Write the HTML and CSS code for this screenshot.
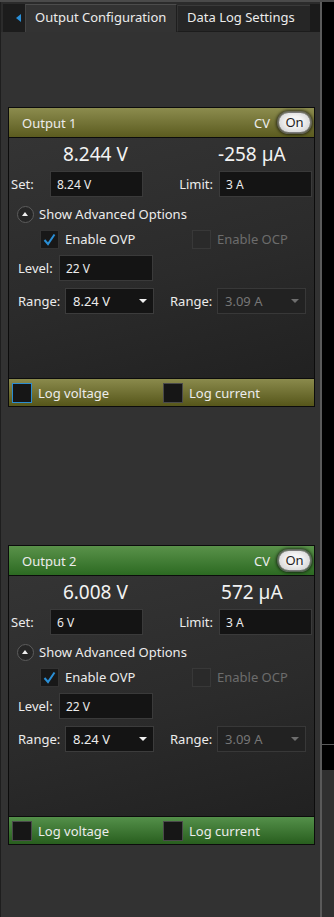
FILE: index.html
```html
<!DOCTYPE html>
<html lang="en">
<head>
    <meta charset="UTF-8">
    <meta name="viewport" content="width=device-width, initial-scale=1.0">
    <title>Output Configuration</title>
    <link rel="stylesheet" href="styles.css">
</head>
<body>
    <div class="pane">
        <div class="tabs">
            <div class="tab-back"><span class="back-arrow"></span></div>
            <div class="tab active">Output Configuration</div>
            <div class="tab">Data Log Settings</div>
            <div class="tab-fill"></div>
        </div>

        <div class="content">
            <div class="output olive">
                <div class="output-head">
                    <span class="output-name">Output 1</span>
                    <span class="mode">CV</span>
                    <span class="toggle">On</span>
                </div>
                <div class="output-body">
                    <div class="readings">
                        <div class="reading volts">8.244 V</div>
                        <div class="reading amps">-258 µA</div>
                    </div>
                    <div class="row set-row">
                        <span class="label set-label">Set:</span>
                        <div class="field">8.24 V</div>
                        <span class="label limit-label">Limit:</span>
                        <div class="field">3 A</div>
                    </div>
                    <div class="row adv-row">
                        <span class="adv-icon"></span>
                        <span>Show Advanced Options</span>
                    </div>
                    <div class="row check-row">
                        <div class="check-item">
                            <span class="box checked">
                                <svg width="17" height="17" viewBox="0 0 17 17"><path d="M3.5 9 L7 13 L13.5 3.5" fill="none" stroke="#2a8fd6" stroke-width="2"/></svg>
                            </span>
                            <span>Enable OVP</span>
                        </div>
                        <div class="check-item disabled">
                            <span class="box"></span>
                            <span>Enable OCP</span>
                        </div>
                    </div>
                    <div class="row level-row">
                        <span class="label level-label">Level:</span>
                        <div class="field level-field">22 V</div>
                    </div>
                    <div class="row range-row">
                        <span class="label range-label">Range:</span>
                        <div class="select">8.24 V<span class="caret"></span></div>
                        <span class="label range-label second">Range:</span>
                        <div class="select disabled">3.09 A<span class="caret"></span></div>
                    </div>
                </div>
                <div class="output-foot">
                    <div class="log-item"><span class="log-box focus"></span>Log voltage</div>
                    <div class="log-item"><span class="log-box"></span>Log current</div>
                </div>
            </div>

            <div class="output green">
                <div class="output-head">
                    <span class="output-name">Output 2</span>
                    <span class="mode">CV</span>
                    <span class="toggle">On</span>
                </div>
                <div class="output-body">
                    <div class="readings">
                        <div class="reading volts">6.008 V</div>
                        <div class="reading amps">572 µA</div>
                    </div>
                    <div class="row set-row">
                        <span class="label set-label">Set:</span>
                        <div class="field">6 V</div>
                        <span class="label limit-label">Limit:</span>
                        <div class="field">3 A</div>
                    </div>
                    <div class="row adv-row">
                        <span class="adv-icon"></span>
                        <span>Show Advanced Options</span>
                    </div>
                    <div class="row check-row">
                        <div class="check-item">
                            <span class="box checked">
                                <svg width="17" height="17" viewBox="0 0 17 17"><path d="M3.5 9 L7 13 L13.5 3.5" fill="none" stroke="#2a8fd6" stroke-width="2"/></svg>
                            </span>
                            <span>Enable OVP</span>
                        </div>
                        <div class="check-item disabled">
                            <span class="box"></span>
                            <span>Enable OCP</span>
                        </div>
                    </div>
                    <div class="row level-row">
                        <span class="label level-label">Level:</span>
                        <div class="field level-field">22 V</div>
                    </div>
                    <div class="row range-row">
                        <span class="label range-label">Range:</span>
                        <div class="select">8.24 V<span class="caret"></span></div>
                        <span class="label range-label second">Range:</span>
                        <div class="select disabled">3.09 A<span class="caret"></span></div>
                    </div>
                </div>
                <div class="output-foot">
                    <div class="log-item"><span class="log-box"></span>Log voltage</div>
                    <div class="log-item"><span class="log-box"></span>Log current</div>
                </div>
            </div>
        </div>
    </div>

    <div class="edge">
        <div class="edge-stub"></div>
    </div>
</body>
</html>
```

FILE: styles.css
```css
* {
    margin: 0;
    padding: 0;
    box-sizing: border-box;
}

body {
    display: flex;
    width: 334px;
    height: 917px;
    overflow: hidden;
    background: #000;
    border-top: 2px solid #4a4a4a;
    font-family: "Noto Sans", "DejaVu Sans", sans-serif;
    font-size: 13px;
    color: #ececec;
}

.pane {
    width: 320px;
    background: #323232;
    border-left: 1px solid #1e1e1e;
}

/* tab strip */
.tabs {
    display: flex;
    height: 30px;
    padding: 2px 0 0 2px;
    background: #2b2b2b;
}

.tab-back {
    width: 22px;
    background: #1c1c1c;
    display: flex;
    align-items: center;
    justify-content: flex-end;
    padding-right: 4px;
}

.back-arrow {
    width: 0;
    height: 0;
    border-top: 4px solid transparent;
    border-bottom: 4px solid transparent;
    border-right: 5px solid #2a8fd8;
}

.tab {
    display: flex;
    align-items: center;
    width: 133px;
    padding: 0 0 3px 9px;
    margin-top: 1px;
    background: #262626;
    border-top: 1px solid #3a3a3a;
    border-left: 1px solid #333;
    border-bottom: 1px solid #1c1c1c;
    white-space: nowrap;
}

.tab.active {
    width: 152px;
    margin-top: 0;
    padding-bottom: 4px;
    background: #333;
    border-top: 1px solid #4c4c4c;
    border-left: 1px solid #444;
    border-right: 1px solid #1e1e1e;
    border-bottom: none;
}

.tab-fill {
    flex: 1;
    background: #1b1b1b;
}

.content {
    padding-left: 7px;
}

/* output cards */
.output {
    width: 307px;
    margin-top: 75px;
    border: 1px solid #0c0c0c;
}

.output.green {
    margin-top: 138px;
}

.output-head {
    display: flex;
    align-items: center;
    height: 30px;
    padding: 0 3px 0 13px;
    border-bottom: 1px solid #0c0c0c;
}

.olive .output-head {
    background: linear-gradient(#8c8c4e, #5b5b1f);
}

.green .output-head {
    background: linear-gradient(#5a924a, #2c6a22);
}

.output-name {
    flex: 1;
}

.mode {
    margin-right: 8px;
}

.toggle {
    width: 33px;
    height: 21px;
    line-height: 19px;
    text-align: center;
    color: #1e1e1e;
    background: radial-gradient(ellipse at 50% 45%, #f4f4f4 35%, #c8c8c8 100%);
    border: 1px solid #7a7a7a;
    border-radius: 11px;
    box-shadow: 0 0 0 1px rgba(140,140,140,0.55), 0 0 3px 2px rgba(0,0,0,0.6);
}

.output-body {
    height: 240px;
    padding: 0 2px;
    background: linear-gradient(165deg, #343434 0%, #2b2b2b 55%, #212121 100%);
}

.readings {
    display: flex;
    height: 32px;
    align-items: center;
    font-size: 19px;
    color: #f2f2f2;
}

.reading.volts {
    width: 171px;
    text-align: center;
}

.reading.amps {
    width: 122px;
    margin-left: 12px;
    text-align: center;
}

.row {
    display: flex;
    align-items: center;
}

.set-row {
    height: 26px;
    margin-top: 1px;
}

.label {
    white-space: nowrap;
}

.set-label {
    width: 39px;
}

.limit-label {
    margin-left: auto;
    margin-right: 6px;
}

.field {
    width: 93px;
    height: 26px;
    padding-left: 6px;
    display: flex;
    align-items: center;
    font-size: 12px;
    background: #141414;
    border: 1px solid #3a3a3a;
}

.adv-row {
    height: 26px;
    margin-top: 4px;
    padding-left: 6px;
}

.adv-icon {
    position: relative;
    width: 17px;
    height: 17px;
    margin-right: 5px;
    border-radius: 50%;
    background: #262626;
    border: 1px solid #5c5c5c;
}

.adv-icon::after {
    content: "";
    position: absolute;
    left: 4px;
    top: 5px;
    border-left: 3.5px solid transparent;
    border-right: 3.5px solid transparent;
    border-bottom: 4px solid #f0f0f0;
}

.check-row {
    height: 20px;
    margin-top: 2px;
    padding-left: 29px;
}

.check-item {
    display: flex;
    align-items: center;
    flex-shrink: 0;
    width: 152px;
}

.check-item.disabled {
    width: auto;
    color: #6c6c6c;
}

.box {
    display: flex;
    align-items: center;
    justify-content: center;
    width: 19px;
    height: 19px;
    margin-right: 6px;
    background: #2a2a2a;
    border: 1px solid #383838;
}

.box.checked {
    background: #181818;
    border-color: #333;
}

.level-row {
    height: 26px;
    margin-top: 6px;
    padding-left: 7px;
}

.level-label {
    width: 41px;
}

.level-field {
    width: 94px;
}

.range-row {
    height: 26px;
    margin-top: 7px;
    padding-left: 7px;
}

.range-label {
    width: 47px;
}

.range-label.second {
    margin-left: 16px;
}

.select {
    display: flex;
    align-items: center;
    width: 89px;
    height: 26px;
    padding: 0 6px 0 7px;
    background: #141414;
    border: 1px solid #3c3c3c;
}

.select.disabled {
    color: #767676;
    background: #222;
    border-color: #383838;
}

.caret {
    margin-left: auto;
    border-left: 4px solid transparent;
    border-right: 4px solid transparent;
    border-top: 4px solid #f0f0f0;
}

.select.disabled .caret {
    border-top-color: #6e6e6e;
}

/* footer log toggles */
.output-foot {
    display: flex;
    align-items: center;
    height: 28px;
    padding-left: 3px;
    border-top: 1px solid #0c0c0c;
}

.olive .output-foot {
    background: linear-gradient(#8a8a4c, #56561a);
}

.green .output-foot {
    background: linear-gradient(#54904a, #285e1e);
}

.log-item {
    display: flex;
    align-items: center;
    width: 151px;
}

.log-box {
    width: 20px;
    height: 20px;
    margin-right: 6px;
    background: #161616;
    border: 1px solid #4a4a4a;
}

.log-box.focus {
    border-color: #2b8cd2;
}

/* strip of the neighbouring window on the right */
.edge {
    flex: 1;
    display: flex;
    flex-direction: column;
    border-left: 2px solid #5a5a5a;
}

.edge-stub {
    margin-top: 742px;
    flex: 1;
    background: #303030;
    border-top: 1px solid #5a5a5a;
    box-shadow: inset 0 25px 0 #000, inset 0 24px 0 #161616;
}
```
